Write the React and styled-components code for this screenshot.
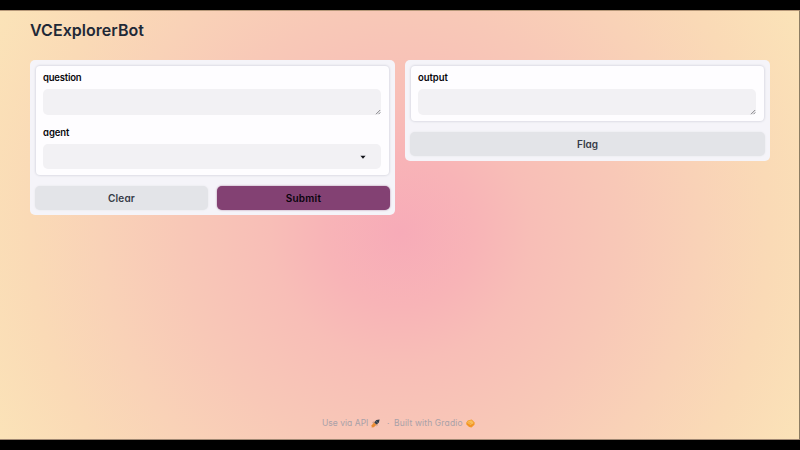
import React from "react";
import styled, { createGlobalStyle } from "styled-components";

const GlobalStyle = createGlobalStyle`
  * { box-sizing: border-box; }
  body {
    margin: 0;
    background: #000;
    font-family: "Inter", "Open Sans", sans-serif;
    font-feature-settings: "cv11" 1;
  }
`;

const Screen = styled.div`
  width: 800px;
  height: 450px;
  padding: 10px 0;
  background: #000;
  overflow: hidden;
`;

const Page = styled.main`
  display: flex;
  flex-direction: column;
  height: 430px;
  padding: 0 29px 0 30px;
  border-top: 1px solid #b69879;
  border-bottom: 1px solid #a08873;
  border-right: 1px solid #8c7d63;
  background: radial-gradient(circle at 400px 221px, #f7abb8 0, #f8b4b7 75px, #f8beb7 130px, #f8c8b7 220px, #f9d2b7 300px, #fadab6 370px, #fbe3b8 453px);
`;

const Title = styled.h1`
  margin: 8px 0 0;
  height: 41px;
  font-size: 16px;
  line-height: 22px;
  font-weight: 560;
  letter-spacing: 0.04px;
  color: #1f2937;
`;

const Columns = styled.div`
  display: grid;
  grid-template-columns: 365px 365px;
  gap: 10px;
  align-items: start;
`;

const Panel = styled.section`
  display: flex;
  flex-direction: column;
  gap: 11px;
  padding: 6px 5px 5px;
  border-radius: 5px;
  background: #f5f4f9;
`;

const Form = styled.div`
  display: flex;
  flex-direction: column;
  gap: 12px;
  height: ${(p) => p.$height};
  margin: 0 1px 0 0.5px;
  padding: 6px 8px 7px 7.5px;
  border-radius: 4px;
  background: #fefdff;
  box-shadow: 0 0 2px 1px #dddde5;
`;

const Field = styled.label`
  display: flex;
  flex-direction: column;
`;

const Label = styled.span`
  height: 17px;
  font-size: 9.5px;
  line-height: 12px;
  font-weight: 600;
  letter-spacing: ${(p) => p.$tracking || "-0.05px"};
  color: #08080c;
`;

const Input = styled.div`
  display: flex;
  justify-content: flex-end;
  align-items: ${(p) => (p.$select ? "center" : "flex-end")};
  height: ${(p) => (p.$select ? "25px" : "26px")};
  padding-right: ${(p) => (p.$select ? "15px" : "0")};
  border-radius: 5px;
  background: #f2f1f4;
`;

const Actions = styled.div`
  display: grid;
  grid-auto-flow: column;
  grid-auto-columns: 1fr;
  gap: 9px;
`;

const Button = styled.button`
  height: 24px;
  padding: 0;
  border: 0;
  border-radius: 5px;
  font: inherit;
  font-feature-settings: inherit;
  font-size: 10px;
  line-height: 23px;
  font-weight: ${(p) => (p.$primary ? 600 : 560)};
  letter-spacing: ${(p) => p.$tracking || "0"};
  color: ${(p) => (p.$primary ? "#08030b" : "#363b47")};
  background: ${(p) => (p.$primary ? "#834173" : "#e3e4e8")};
  box-shadow: 0 0 2px ${(p) => (p.$primary ? "#a77b9d" : "#e3e4e8")};
`;

const Footer = styled.footer`
  display: flex;
  align-items: center;
  height: 14px;
  margin: auto 0 9px 292px;
  font-size: 8.5px;
  color: #a9a1a8;
  white-space: nowrap;
`;

const FooterLink = styled.span`
  display: flex;
  align-items: center;
  width: ${(p) => p.$width};
  gap: 3px;
  letter-spacing: ${(p) => p.$tracking};
`;

const Dot = styled.span`
  width: 7px;
`;

const ResizeGrip = () => (
  <svg width="6" height="6" viewBox="0 0 6 6" fill="none" stroke="#77777b" strokeWidth=".9">
    <path d="M1 5.2 5.2 1M3.5 5.2l1.8-1.8" />
  </svg>
);

const Caret = () => (
  <svg width="6" height="4" viewBox="0 0 6 4" fill="#111218">
    <path d="M.4.7h5.2L3 3.7z" />
  </svg>
);

const Rocket = () => (
  <svg width="9" height="9" viewBox="0 0 9 9">
    <path d="M8.6.6 5.3 1.1 3.1 3.4l2.5 2.3 2.3-2.2z" fill="#343d49" />
    <path d="m3.7 2-2 .7-.6 1.5 2-.4zM5.5 5.6l-.3 2 1.4-.8.4-2z" fill="#d8a58e" />
    <path d="M3 3.6.7 6.2.6 8.6l2.2-.4 2.6-2.5z" fill="#e98b32" />
    <path d="m5.2 2.4 1.5 1.4" stroke="#a1a3a6" strokeWidth=".6" />
  </svg>
);

const GradioMark = () => (
  <svg width="9" height="9" viewBox="0 0 9 9">
    <path d="M.2 3.8 1.8 1.4 5.7.5l3 3-.2 2.2-3 2.8-2.4-.4L.4 5.4z" fill="#f49a26" />
    <path d="m1.1 3.8 1.3-1.9 3-.6L7.8 4 4.9 6.3z" fill="#f8bd57" />
    <path d="m2.3 3.1 3.6 2.6M1.1 5l3.6 2.1 3-2.3" stroke="#ea8526" strokeWidth=".5" fill="none" />
  </svg>
);

export default function App() {
  return (
    <>
      <GlobalStyle />
      <Screen>
        <Page>
          <Title>VCExplorerBot</Title>
          <Columns>
            <Panel>
              <Form $height="109px">
                <Field>
                  <Label $tracking="-0.2px">question</Label>
                  <Input><ResizeGrip /></Input>
                </Field>
                <Field>
                  <Label>agent</Label>
                  <Input $select><Caret /></Input>
                </Field>
              </Form>
              <Actions>
                <Button $tracking="0.15px">Clear</Button>
                <Button $primary $tracking="0.25px">Submit</Button>
              </Actions>
            </Panel>
            <Panel>
              <Form $height="55px">
                <Field>
                  <Label>output</Label>
                  <Input><ResizeGrip /></Input>
                </Field>
              </Form>
              <Actions>
                <Button>Flag</Button>
              </Actions>
            </Panel>
          </Columns>
          <Footer>
            <FooterLink $width="65px" $tracking="0.02px">Use via API <Rocket /></FooterLink>
            <Dot>·</Dot>
            <FooterLink $tracking="0.15px">Built with Gradio <GradioMark /></FooterLink>
          </Footer>
        </Page>
      </Screen>
    </>
  );
}
